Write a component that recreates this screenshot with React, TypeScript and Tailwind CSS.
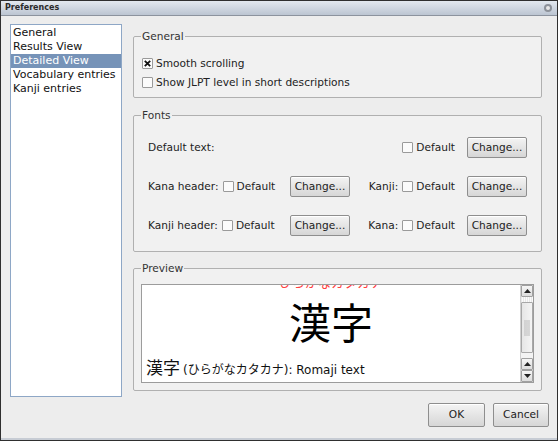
import React from "react";

const ui = { fontFamily: '"DejaVu Sans", "Noto Sans CJK JP", sans-serif' };
const cjk = { fontFamily: '"Noto Sans CJK JP", "DejaVu Sans", sans-serif' };

function Check({ checked = false }: { checked?: boolean }) {
  return (
    <span className="inline-flex h-[11px] w-[11px] shrink-0 items-center justify-center rounded-[1px] border border-[#9a9a9a] bg-[#fbfbfb]">
      {checked && (
        <svg width="7" height="7" viewBox="0 0 7 7">
          <path d="M0.8 0.8 L6.2 6.2 M6.2 0.8 L0.8 6.2" stroke="#111" strokeWidth="1.8" />
        </svg>
      )}
    </span>
  );
}

function Button({ label, w = "w-[60px]", h = "h-[21px]" }: { label: string; w?: string; h?: string }) {
  return (
    <div
      className={`${w} ${h} flex shrink-0 items-center justify-center rounded-[2px] border border-[#8e8e8e] bg-gradient-to-b from-[#f4f4f4] to-[#d6d6d6] text-[#222] shadow-[inset_0_1px_0_#fff]`}
    >
      {label}
    </div>
  );
}

function Group({ title, className, children }: { title: string; className?: string; children: React.ReactNode }) {
  return (
    <fieldset className={`rounded-[2px] border border-[#b0b0b0] bg-[#f1f1f1] px-0 ${className ?? ""}`}>
      <legend className="ml-[7px] px-[1px] leading-[13px] text-[#333]">{title}</legend>
      {children}
    </fieldset>
  );
}

function DefaultBox() {
  return (
    <span className="flex items-center gap-[3px]">
      <Check />
      <span>Default</span>
    </span>
  );
}

function FontRow({ label, right }: { label: string; right?: string }) {
  return (
    <div className="flex h-[21px] items-center">
      <div className="flex w-[142px] items-center gap-[4px]">
        <span>{label}</span>
        {right !== undefined && <DefaultBox />}
      </div>
      {right !== undefined ? <Button label="Change..." /> : <div className="w-[60px]" />}
      <div className="flex w-[117px] items-center justify-end gap-[4px] pr-[12px]">
        {right && <span>{right}</span>}
        <DefaultBox />
      </div>
      <Button label="Change..." />
    </div>
  );
}

function Arrow({ down = false }: { down?: boolean }) {
  return (
    <div className="flex h-[12px] w-[12px] shrink-0 items-center justify-center rounded-[1px] border border-[#a0a0a0] bg-gradient-to-b from-[#f6f6f6] to-[#dcdcdc]">
      <svg width="7" height="4" viewBox="0 0 7 4">
        <path d={down ? "M0 0 L7 0 L3.5 4 Z" : "M0 4 L7 4 L3.5 0 Z"} fill="#222" />
      </svg>
    </div>
  );
}

export default function App() {
  const items = ["General", "Results View", "Detailed View", "Vocabulary entries", "Kanji entries"];
  return (
    <div className="h-[441px] w-[558px] overflow-hidden bg-[#2f2f2f] p-[1px] text-[10.6px] text-[#222]" style={ui}>
      <div className="flex h-full flex-col bg-[#ededed]">
        <div className="flex h-[15px] items-center justify-between border-b border-[#8c939e] bg-gradient-to-b from-[#e3e8ef] to-[#bcc5d2] px-[4px]">
          <span className="text-[8px] font-bold text-[#2a2a2a]">Preferences</span>
          <span className="mr-[1px] flex h-[8px] w-[8px] items-center justify-center rounded-full bg-[#8d929a]">
            <span className="h-[4px] w-[4px] rounded-full bg-[#e8e8e8]" />
          </span>
        </div>

        <div className="flex flex-1 pl-[9px] pr-[15px] pt-[8px]">
          <div className="h-[373px] w-[112px] shrink-0 border border-[#8ea7c6] bg-white pt-[1px]">
            {items.map((t, i) => (
              <div
                key={t}
                className={`h-[14px] pl-[2px] text-[11px] leading-[14px] ${i === 2 ? "bg-[#7693b8] text-white" : "text-[#111]"}`}
              >
                {t}
              </div>
            ))}
          </div>

          <div className="ml-[11px] mt-[6px] flex flex-1 flex-col">
            <Group title="General" className="h-[68px]">
              <div className="flex flex-col gap-[6px] pl-[8px] pt-[14px]">
                <div className="flex h-[13px] items-center gap-[3px]">
                  <Check checked />
                  <span>Smooth scrolling</span>
                </div>
                <div className="flex h-[13px] items-center gap-[3px]">
                  <Check />
                  <span>Show JLPT level in short descriptions</span>
                </div>
              </div>
            </Group>

            <Group title="Fonts" className="mt-[11px] h-[143px]">
              <div className="flex flex-col gap-[18px] pl-[14px] pt-[15px]">
                <FontRow label="Default text:" />
                <FontRow label="Kana header:" right="Kanji:" />
                <FontRow label="Kanji header:" right="Kana:" />
              </div>
            </Group>

            <Group title="Preview" className="mt-[10px] h-[129px]">
              <div className="mx-[7px] mt-[9px] flex h-[99px] border border-[#9c9c9c] bg-white">
                <div className="relative flex-1 overflow-hidden">
                  <div className="absolute left-0 right-0 top-[-11px] text-center text-[13px] leading-[16px] text-[#ff4040]" style={cjk}>
                    ひらがなカタカナ
                  </div>
                  <div className="absolute left-0 right-0 top-[11px] text-center text-[42px] leading-[50px] text-black" style={cjk}>
                    漢字
                  </div>
                  <div className="absolute bottom-[3px] left-[4px] flex items-baseline text-[12px] text-[#111]">
                    <span className="text-[17px] leading-[22px]" style={cjk}>漢字</span>
                    <span className="ml-[3px] text-[12px]">(</span>
                    <span className="text-[12px]" style={cjk}>ひらがなカタカナ</span>
                    <span className="text-[12px]">): Romaji text</span>
                  </div>
                </div>
                <div className="flex w-[13px] flex-col border-l border-[#d0d0d0] bg-[#f3f3f3]">
                  <Arrow />
                  <div className="h-[5px] shrink-0 bg-[repeating-linear-gradient(90deg,#e8e8e8_0_1px,#fafafa_1px_2px)]" />
                  <div className="flex h-[51px] shrink-0 items-center justify-center rounded-[1px] border border-[#a8a8a8] bg-gradient-to-r from-[#e6e6e6] to-[#f4f4f4]">
                    <div className="h-[16px] w-[6px] bg-[radial-gradient(circle,#b8b8b8_0.6px,transparent_0.8px)] bg-[length:2px_2px]" />
                  </div>
                  <div className="flex-1" />
                  <Arrow />
                  <Arrow down />
                </div>
              </div>
            </Group>
          </div>
        </div>

        <div className="flex justify-end gap-[8px] pb-[11px] pr-[8px]">
          <Button label="OK" w="w-[57px]" h="h-[24px]" />
          <Button label="Cancel" w="w-[56px]" h="h-[24px]" />
        </div>
        <div className="h-[2px] bg-[#c7ccd4]" />
      </div>
    </div>
  );
}
